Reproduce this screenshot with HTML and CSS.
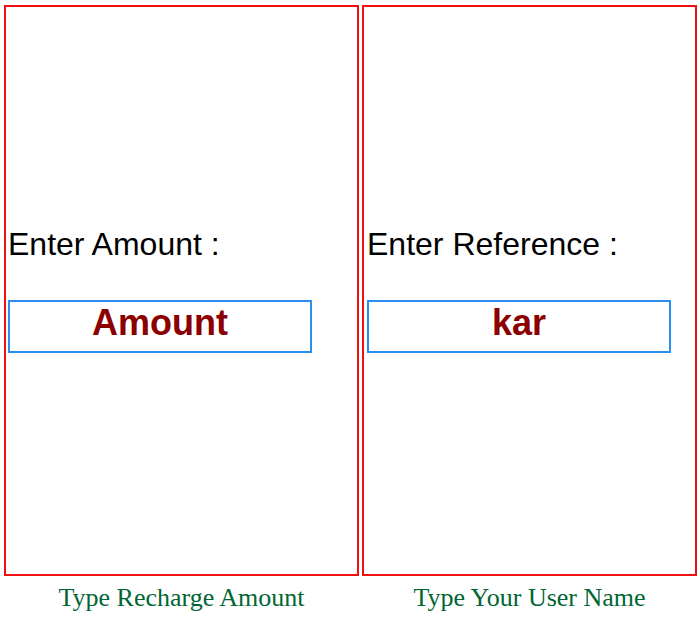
FILE: index.html
```html
<!DOCTYPE html>
<html>
<head>
<meta charset="utf-8">
<link rel="stylesheet" href="styles.css">
</head>
<body>
<div class="row">
  <div class="col col-left">
    <div class="box box-left">
      <div class="label">Enter Amount :</div>
      <input class="field" type="text" value="Amount">
    </div>
    <div class="caption">Type Recharge Amount</div>
  </div>
  <div class="col col-right">
    <div class="box box-right">
      <div class="label">Enter Reference :</div>
      <input class="field" type="text" value="kar">
    </div>
    <div class="caption">Type Your User Name</div>
  </div>
</div>
</body>
</html>
```
FILE: styles.css
```css
html, body {
  margin: 0;
  padding: 0;
  background: #ffffff;
}
body {
  padding: 5px 0 0 4px;
}
.row {
  display: flex;
  gap: 3px;
  align-items: flex-start;
}
.col {
  display: flex;
  flex-direction: column;
}
.col-left { width: 355px; }
.col-right { width: 335px; }
.box {
  box-sizing: border-box;
  height: 571px;
  border: 2px solid #f01010;
  padding-bottom: 2px;
  display: flex;
  flex-direction: column;
  justify-content: center;
  align-items: flex-start;
}
.box-left { padding-left: 2px; }
.box-right { padding-left: 3px; }
.label {
  font-family: "Liberation Sans", Arial, sans-serif;
  font-size: 32px;
  color: #000000;
  margin-bottom: 37px;
  white-space: nowrap;
}
.field {
  box-sizing: border-box;
  width: 304px;
  height: 53px;
  margin: 0;
  padding: 0 0 7px 0;
  border: 2px solid #2b8fef;
  outline: none;
  background: #ffffff;
  font-family: "Liberation Sans", Arial, sans-serif;
  font-weight: bold;
  font-size: 36px;
  color: #8b0000;
  text-align: center;
}
.caption {
  margin-top: 7px;
  text-align: center;
  font-family: "Liberation Serif", "Times New Roman", serif;
  font-size: 26px;
  color: #006633;
}
```
